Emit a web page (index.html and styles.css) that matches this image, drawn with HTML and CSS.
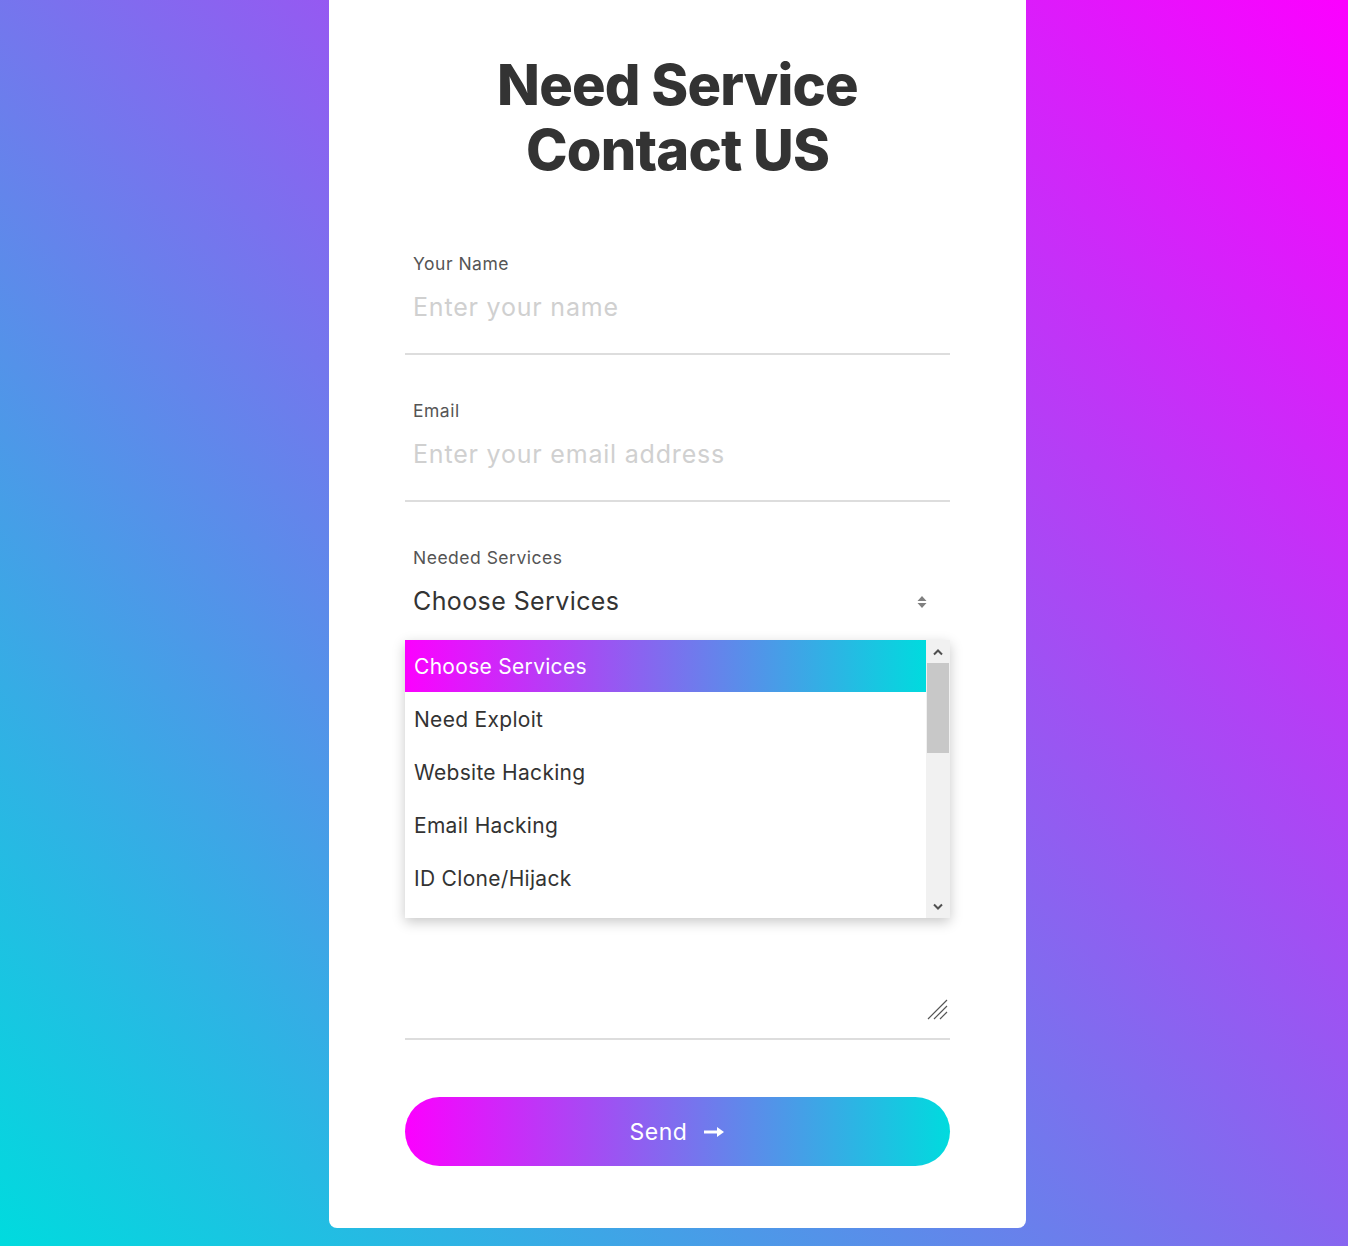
FILE: index.html
```html
<!DOCTYPE html>
<html lang="en">
<head>
<meta charset="utf-8">
<title>Need Service Contact US</title>
<link rel="stylesheet" href="styles.css">
</head>
<body>
<div class="page">
  <div class="card">
    <h1 class="title">Need Service<br>Contact US</h1>
    <form class="form">
      <div class="field">
        <label class="label" for="name">Your Name</label>
        <input class="input" id="name" type="text" placeholder="Enter your name">
      </div>
      <div class="field">
        <label class="label" for="email">Email</label>
        <input class="input" id="email" type="email" placeholder="Enter your email address">
      </div>
      <div class="field field-select">
        <label class="label" for="service">Needed Services</label>
        <div class="select-wrap">
          <select class="select" id="service">
            <option>Choose Services</option>
            <option>Need Exploit</option>
            <option>Website Hacking</option>
            <option>Email Hacking</option>
            <option>ID Clone/Hijack</option>
          </select>
          <svg class="select-arrows" width="12" height="16" viewBox="0 0 12 16"><path d="M6 2 L10.5 7 H1.5 Z M6 14 L10.5 9 H1.5 Z" fill="#808080"/></svg>
        </div>
        <div class="dropdown">
          <ul class="options">
            <li class="option option-active">Choose Services</li>
            <li class="option">Need Exploit</li>
            <li class="option">Website Hacking</li>
            <li class="option">Email Hacking</li>
            <li class="option">ID Clone/Hijack</li>
          </ul>
          <div class="scrollbar">
            <div class="scroll-btn">
              <svg width="12" height="8" viewBox="0 0 12 8"><path d="M2 6.5 L6 2.5 L10 6.5" fill="none" stroke="#505050" stroke-width="2"/></svg>
            </div>
            <div class="scroll-track"><div class="scroll-thumb"></div></div>
            <div class="scroll-btn">
              <svg width="12" height="8" viewBox="0 0 12 8"><path d="M2 1.5 L6 5.5 L10 1.5" fill="none" stroke="#505050" stroke-width="2"/></svg>
            </div>
          </div>
        </div>
      </div>
      <div class="field">
        <label class="label label-hidden" for="msg">Message</label>
        <div class="textarea-wrap">
          <textarea class="textarea" id="msg"></textarea>
          <svg class="resizer" width="22" height="22" viewBox="0 0 22 22"><path d="M2 21 L21 2 M8 21 L21 8 M14 21 L21 14" stroke="#555" stroke-width="1.2" fill="none"/></svg>
        </div>
      </div>
      <button class="send" type="button">
        <span>Send</span>
        <svg width="22" height="12" viewBox="0 0 22 12"><path d="M1 6 H15" stroke="#fff" stroke-width="3"/><path d="M14 1 L21 6 L14 11 Z" fill="#fff"/></svg>
      </button>
    </form>
  </div>
</div>
</body>
</html>
```

FILE: styles.css
```css
html, body {
  margin: 0;
  padding: 0;
}
body {
  min-height: 1246px;
  background: linear-gradient(47deg, #00dbde 0%, #fc00ff 100%);
  font-family: "Inter", "Noto Sans", sans-serif;
  color: #333;
}
.page {
  display: flex;
  justify-content: center;
  padding-left: 7px;
}
.card {
  width: 697px;
  box-sizing: border-box;
  background: #fff;
  border-radius: 0 0 8px 8px;
  padding: 53px 76px 62px;
}
.title {
  margin: 0;
  text-align: center;
  font-size: 56px;
  line-height: 65px;
  font-weight: 800;
  color: #333;
  letter-spacing: -0.8px;
}
.form {
  display: flex;
  flex-direction: column;
  gap: 44px;
  margin-top: 69px;
}
.field {
  display: flex;
  flex-direction: column;
}
.field-select {
  position: relative;
}
.label {
  display: block;
  font-size: 17.5px;
  line-height: 24px;
  letter-spacing: 0.5px;
  color: #555;
  padding: 0 8px;
}
.label-hidden {
  visibility: hidden;
}
.input {
  border: none;
  border-bottom: 2px solid #ddd;
  outline: none;
  font-family: inherit;
  font-size: 25px;
  letter-spacing: 0.8px;
  line-height: 34px;
  height: 79px;
  box-sizing: border-box;
  padding: 14px 8px 29px;
  color: #333;
  background: transparent;
}
.input::placeholder {
  color: #d0d0d0;
}
.select-wrap {
  display: flex;
  align-items: flex-start;
  border-bottom: 2px solid #ddd;
  height: 79px;
  box-sizing: border-box;
  padding: 14px 22px 0 8px;
}
.select {
  flex: 1;
  appearance: none;
  -webkit-appearance: none;
  border: none;
  outline: none;
  background: transparent;
  font-family: inherit;
  font-size: 25px;
  letter-spacing: 0.4px;
  line-height: 34px;
  height: 34px;
  padding: 0;
  color: #333;
}
.select-arrows {
  margin-top: 10px;
}
.dropdown {
  position: absolute;
  top: 94px;
  left: 0;
  width: 545px;
  height: 278px;
  background: #fff;
  box-shadow: 0 4px 12px rgba(0, 0, 0, 0.22);
  display: flex;
  z-index: 5;
}
.options {
  list-style: none;
  margin: 0;
  padding: 0;
  flex: 1;
}
.option {
  height: 53px;
  line-height: 55px;
  padding: 0 9px;
  font-size: 21px;
  letter-spacing: 0.3px;
  color: #333;
}
.option-active {
  height: 52px;
  line-height: 54px;
  color: #fff;
  background: linear-gradient(90deg, #fc00ff 0%, #00dbde 100%);
}
.scrollbar {
  width: 24px;
  background: #f1f1f1;
  display: flex;
  flex-direction: column;
}
.scroll-btn {
  height: 23px;
  display: flex;
  align-items: center;
  justify-content: center;
}
.scroll-track {
  flex: 1;
  padding: 0 1px;
}
.scroll-thumb {
  height: 90px;
  background: #c8c8c8;
}
.textarea-wrap {
  display: flex;
  align-items: flex-end;
  border-bottom: 2px solid #ddd;
  padding-bottom: 18px;
}
.textarea {
  display: block;
  flex: 1;
  box-sizing: border-box;
  height: 303px;
  border: none;
  outline: none;
  resize: none;
  font-family: inherit;
  font-size: 20px;
  padding: 8px;
  color: #333;
}
.resizer {
  flex: none;
  margin-right: 2px;
}
.send {
  margin-top: 13px;
  height: 69px;
  border: none;
  border-radius: 35px;
  background: linear-gradient(90deg, #fc00ff 0%, #00dbde 100%);
  color: #fff;
  font-family: inherit;
  font-size: 23px;
  letter-spacing: 0.5px;
  display: flex;
  align-items: center;
  justify-content: center;
  gap: 16px;
  padding: 0;
  cursor: pointer;
}
```
